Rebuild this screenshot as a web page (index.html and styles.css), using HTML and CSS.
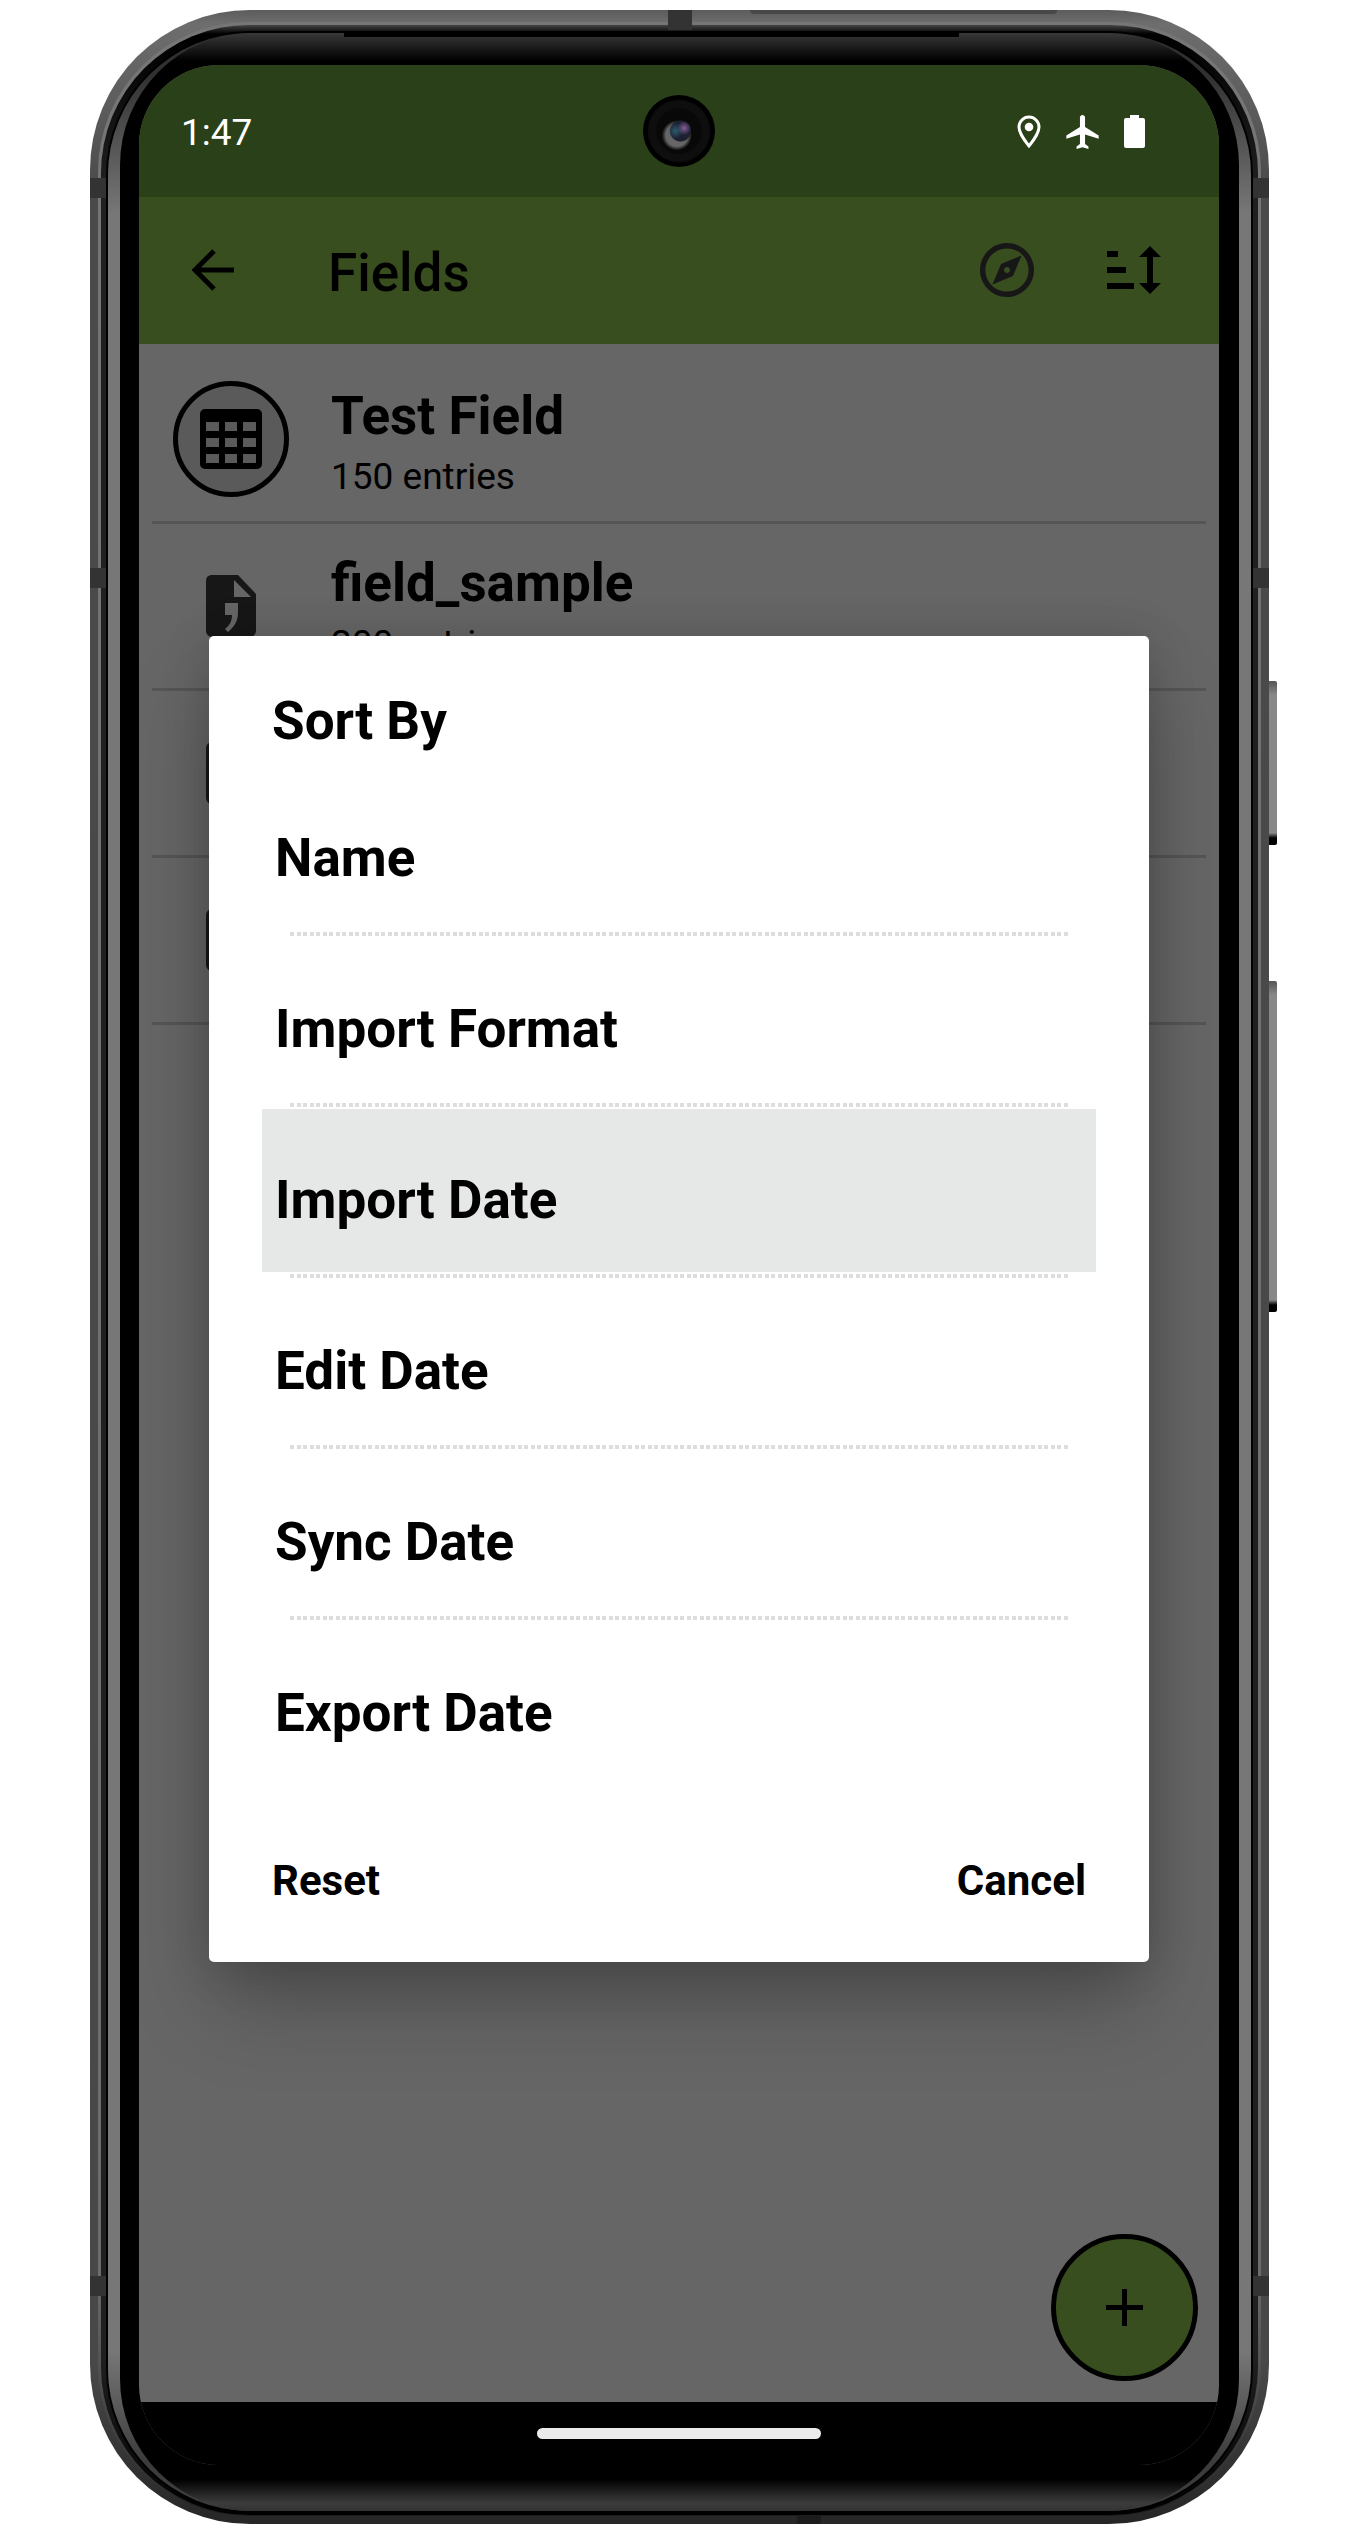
FILE: index.html
```html
<!DOCTYPE html>
<html lang="en">
<head>
<meta charset="utf-8">
<title>Fields</title>
<link rel="stylesheet" href="styles.css">
</head>
<body>
<div class="phone">
  <span class="antenna antenna-top"></span>
  <span class="antenna antenna-bottom"></span>
  <span class="antenna-row row-a"></span>
  <span class="antenna-row row-b"></span>
  <span class="antenna-row row-c"></span>
  <span class="side-key key-power"></span>
  <span class="side-key key-volume"></span>
  <div class="rim"><div class="groove"><div class="edge"><div class="bezel">
    <div class="screen">
      <header class="status">
        <span>1:47</span>
        <span class="camera"></span>
        <div class="status-icons">
          <svg width="24" height="34" viewBox="0 0 24 34"><path d="M12 2C6.500 2 2 6.500 2 12c0 7 10 19 10 19s10-12 10-19C22 6.500 17.500 2 12 2z" fill="none" stroke="#fff" stroke-width="3"/><circle cx="12" cy="12" r="4.300" fill="#fff"/></svg>
          <svg width="33" height="34" viewBox="2 2 19 20"><path d="M21 16v-2l-8-5V3.500c0-.83-.67-1.500-1.500-1.500S10 2.670 10 3.500V9l-8 5v2l8-2.500V19l-2 1.500V22l3.500-1 3.500 1v-1.500L13 19v-5.500l8 2.500z" fill="#fff"/></svg>
          <svg width="21" height="34" viewBox="0 0 21 34"><path d="M6 0h9v3h4a2 2 0 0 1 2 2v26a2 2 0 0 1-2 2H2a2 2 0 0 1-2-2V5a2 2 0 0 1 2-2h4z" fill="#fff"/></svg>
        </div>
      </header>
      <div class="appbar">
        <button class="icon-button" aria-label="Back"><svg width="42" height="42" viewBox="0 0 42 42"><path d="M22 2 3 21l19 19M4 21h38" fill="none" stroke="#000" stroke-width="5"/></svg></button>
        <h1>Fields</h1>
        <button class="icon-button" aria-label="Explore"><svg width="54" height="54" viewBox="2 2 20 20"><path fill="#171717" d="M12 10.900c-.61 0-1.100.49-1.100 1.100s.49 1.100 1.100 1.100c.61 0 1.100-.49 1.100-1.100s-.49-1.100-1.100-1.100zM12 2C6.480 2 2 6.480 2 12s4.480 10 10 10 10-4.480 10-10S17.520 2 12 2zm0 18c-4.410 0-8-3.590-8-8s3.590-8 8-8 8 3.590 8 8-3.590 8-8 8zm2.190-5.810L6.600 17.400 9.810 9.810 17.400 6.600z"/></svg></button>
        <button class="icon-button sort" aria-label="Sort"><svg width="54" height="48" viewBox="0 0 54 48"><path d="M0 5h11v6H0zM0 21h19v6H0zM0 37h27v6H0zM43 0l11 11h-8v26h8L43 48 32 37h8V11h-8z"/></svg></button>
      </div>
      <main>
        <ul class="fields">
          <li><span class="badge ring"><svg width="62" height="60" viewBox="0 0 62 60"><path fill-rule="evenodd" d="M5 0h52a5 5 0 0 1 5 5v50a5 5 0 0 1-5 5H5a5 5 0 0 1-5-5V5a5 5 0 0 1 5-5zM6 13v9h13v-9zm19 0v9h12v-9zm18 0v9h13v-9zM6 29v9h13v-9zm19 0v9h12v-9zm18 0v9h13v-9zM6 45v9h13v-9zm19 0v9h12v-9zm18 0v9h13v-9z"/></svg></span><div class="field-text"><h2>Test Field</h2><p>150 entries</p></div></li>
          <li><span class="badge"><svg width="50" height="62" viewBox="0 0 50 62"><path fill="#171717" fill-rule="evenodd" d="M5 0h27l18 19v37a6 6 0 0 1-6 6H6a6 6 0 0 1-6-6V6a6 6 0 0 1 5-6zM28 5v17h17zM19 28v12h7c0 7-3 11-7 14l3 3c6-5 10-11 10-19V28z"/></svg></span><div class="field-text"><h2>field_sample</h2><p>200 entries</p></div></li>
          <li><span class="badge"><svg width="50" height="62" viewBox="0 0 50 62"><rect width="50" height="62" rx="6" fill="#171717"/></svg></span></li>
          <li><span class="badge"><svg width="50" height="62" viewBox="0 0 50 62"><rect width="50" height="62" rx="6" fill="#171717"/></svg></span></li>
        </ul>
        <button class="fab" aria-label="Add field"><svg width="37" height="37" viewBox="0 0 37 37"><path d="M16 0h5v16h16v5H21v16h-5V21H0v-5h16z"/></svg></button>
      </main>
      <footer class="navbar"><span class="pill"></span></footer>
      <section class="dialog" role="dialog" aria-labelledby="sort-title">
        <h2 id="sort-title">Sort By</h2>
        <div class="options">
          <button>Name</button><hr>
          <button>Import Format</button><hr>
          <button class="selected">Import Date</button><hr>
          <button>Edit Date</button><hr>
          <button>Sync Date</button><hr>
          <button>Export Date</button>
        </div>
        <div class="actions"><button>Reset</button><button>Cancel</button></div>
      </section>
    </div>
  </div></div></div></div>
</div>
</body>
</html>
```
FILE: styles.css
```css
* { box-sizing: border-box; }
body { margin: 0; padding: 10px 98px 10px 90px; background: #fff; font-family: Roboto, "Liberation Sans", sans-serif; color: #000; }
h1, h2, p, ul { margin: 0; padding: 0; font-weight: 400; }
button { border: 0; margin: 0; padding: 0; background: none; color: inherit; font: inherit; cursor: pointer; }
svg { display: block; }

.phone { position: relative; padding: 12px 8px 8px; border-radius: 160px; background: linear-gradient(#5c5c5c, #6e6e6e 14px, #4a4a4a 180px, #484848 calc(100% - 160px), #262626); }
.phone::before { content: ""; position: absolute; left: 56%; top: 0; width: 26%; height: 4px; border-radius: 0 0 8px 8px; background: #484848; }
.rim { padding: 3px 3px 1px; border-radius: 150px; background: linear-gradient(#767676, #6c6c6c calc(100% - 240px), #303030 calc(100% - 30px), #1c1c1c); }
.groove { padding: 8px 7px 4px; border-radius: 148px; background: linear-gradient(#444, #000 9px, #202020 160px, #202020 calc(100% - 160px), #000); }
.edge { padding: 0 12px; border-radius: 142px; background: linear-gradient(#303030 40px, #777 180px, #777 calc(100% - 160px), #3c3c3c calc(100% - 50px)); box-shadow: 0 0 0 2px #000; }
.bezel { position: relative; padding: 32px 20px 46px 19px; border-radius: 132px; background: linear-gradient(#383838, #000 28px, #000 calc(100% - 32px), #3c3c3c calc(100% - 8px), #333); }
.bezel::before { content: ""; position: absolute; left: 20%; right: 25%; top: 0; height: 4px; background: #000; }
.antenna, .antenna-row, .side-key { position: absolute; }
.antenna { width: 24px; height: 20px; background: #333; z-index: 1; }
.antenna-top { left: 50%; top: 0; margin-left: -12px; }
.antenna-bottom { left: 60%; bottom: 0; height: 8px; background: #1c1c1c; }
.antenna-row { left: 0; right: 0; height: 20px; background: linear-gradient(90deg, #333 16px, transparent 16px calc(100% - 16px), #333 calc(100% - 16px)); z-index: 1; }
.row-a { top: 168px; }
.row-b { top: 558px; }
.row-c { bottom: 228px; }
.side-key { left: 100%; width: 8px; border-radius: 0 2px 2px 0; background: linear-gradient(#555, #888 14px, #888 calc(100% - 12px), #000 calc(100% - 7px)); }
.key-power { top: 671px; height: 164px; }
.key-volume { top: 971px; height: 331px; }

.screen { position: relative; display: flex; flex-direction: column; overflow: hidden; border-radius: 80px; background: #666; }
.status { display: flex; align-items: center; justify-content: space-between; height: 132px; padding: 2px 74px 0 42px; background: #2a4018; color: #fff; font-size: 37px; line-height: 44px; }
.status > span { padding-top: 2px; }
.camera { position: absolute; left: 50%; top: 30px; width: 72px; height: 72px; margin-left: -36px; border-radius: 50%; background: radial-gradient(circle at 45% 50%, #2c5a6c 0, transparent 8px), radial-gradient(circle at 57% 46%, #8a5c98 0, transparent 7px), radial-gradient(circle at 52% 50%, #1c2030 0 10px, transparent 11px), radial-gradient(circle at 47% 56%, #666 0 11px, transparent 15px), radial-gradient(circle, #080808 0 22px, #0e0e0e 24px 30px, #000 32px); }
.status-icons { display: flex; gap: 25px; }
.appbar { display: flex; align-items: center; height: 147px; padding: 0 58px 2px 53px; background: #394e1f; }
.appbar h1 { flex: 1; padding-left: 94px; padding-top: 6px; font-size: 53px; line-height: 64px; font-weight: 500; }
.sort { margin-left: 73px; }

main { display: flex; flex-direction: column; min-height: 2058px; padding: 13px 13px 21px; }
.fields { list-style: none; flex: 1; }
.fields li { display: flex; align-items: center; gap: 42px; height: 167px; padding-left: 21px; border-bottom: 3px solid #555; }
.badge { display: flex; align-items: center; justify-content: center; width: 116px; height: 116px; }
.ring { border: 5px solid #000; border-radius: 50%; background: #5a5a5a; }
.field-text { padding-top: 12px; }
.field-text h2 { font-size: 53px; line-height: 64px; font-weight: 700; }
.field-text p { font-size: 37px; line-height: 58px; }
.fab { display: flex; align-items: center; justify-content: center; align-self: flex-end; width: 147px; height: 147px; margin-right: 8px; border: 5px solid #000; border-radius: 50%; background: #394e1f; }
.navbar { display: flex; justify-content: center; height: 63px; padding-top: 26px; background: #000; }
.pill { width: 284px; height: 11px; border-radius: 6px; background: #ebebeb; }

.dialog { position: absolute; left: 70px; right: 70px; top: 571px; padding: 50px 53px 49px; border-radius: 5px; background: #fff; box-shadow: 0 48px 80px -8px rgba(0, 0, 0, .26), 0 4px 48px rgba(0, 0, 0, .16); }
.dialog h2 { padding-left: 10px; font-size: 53px; line-height: 70px; font-weight: 700; }
.options { display: flex; flex-direction: column; padding-top: 11px; }
.options button { height: 163px; padding: 18px 13px 0; text-align: left; font-size: 53px; line-height: 64px; font-weight: 700; }
.options .selected { background: #e6e8e7; }
.options hr { align-self: stretch; height: 4px; margin: 2px 28px; border: 0; background: repeating-linear-gradient(90deg, #ddd 0 4px, #fff 4px 7px, #ddd 7px 11px, #fff 11px 13px); }
.actions { display: flex; justify-content: space-between; padding: 64px 10px 0; font-size: 42px; line-height: 64px; font-weight: 700; }
```
